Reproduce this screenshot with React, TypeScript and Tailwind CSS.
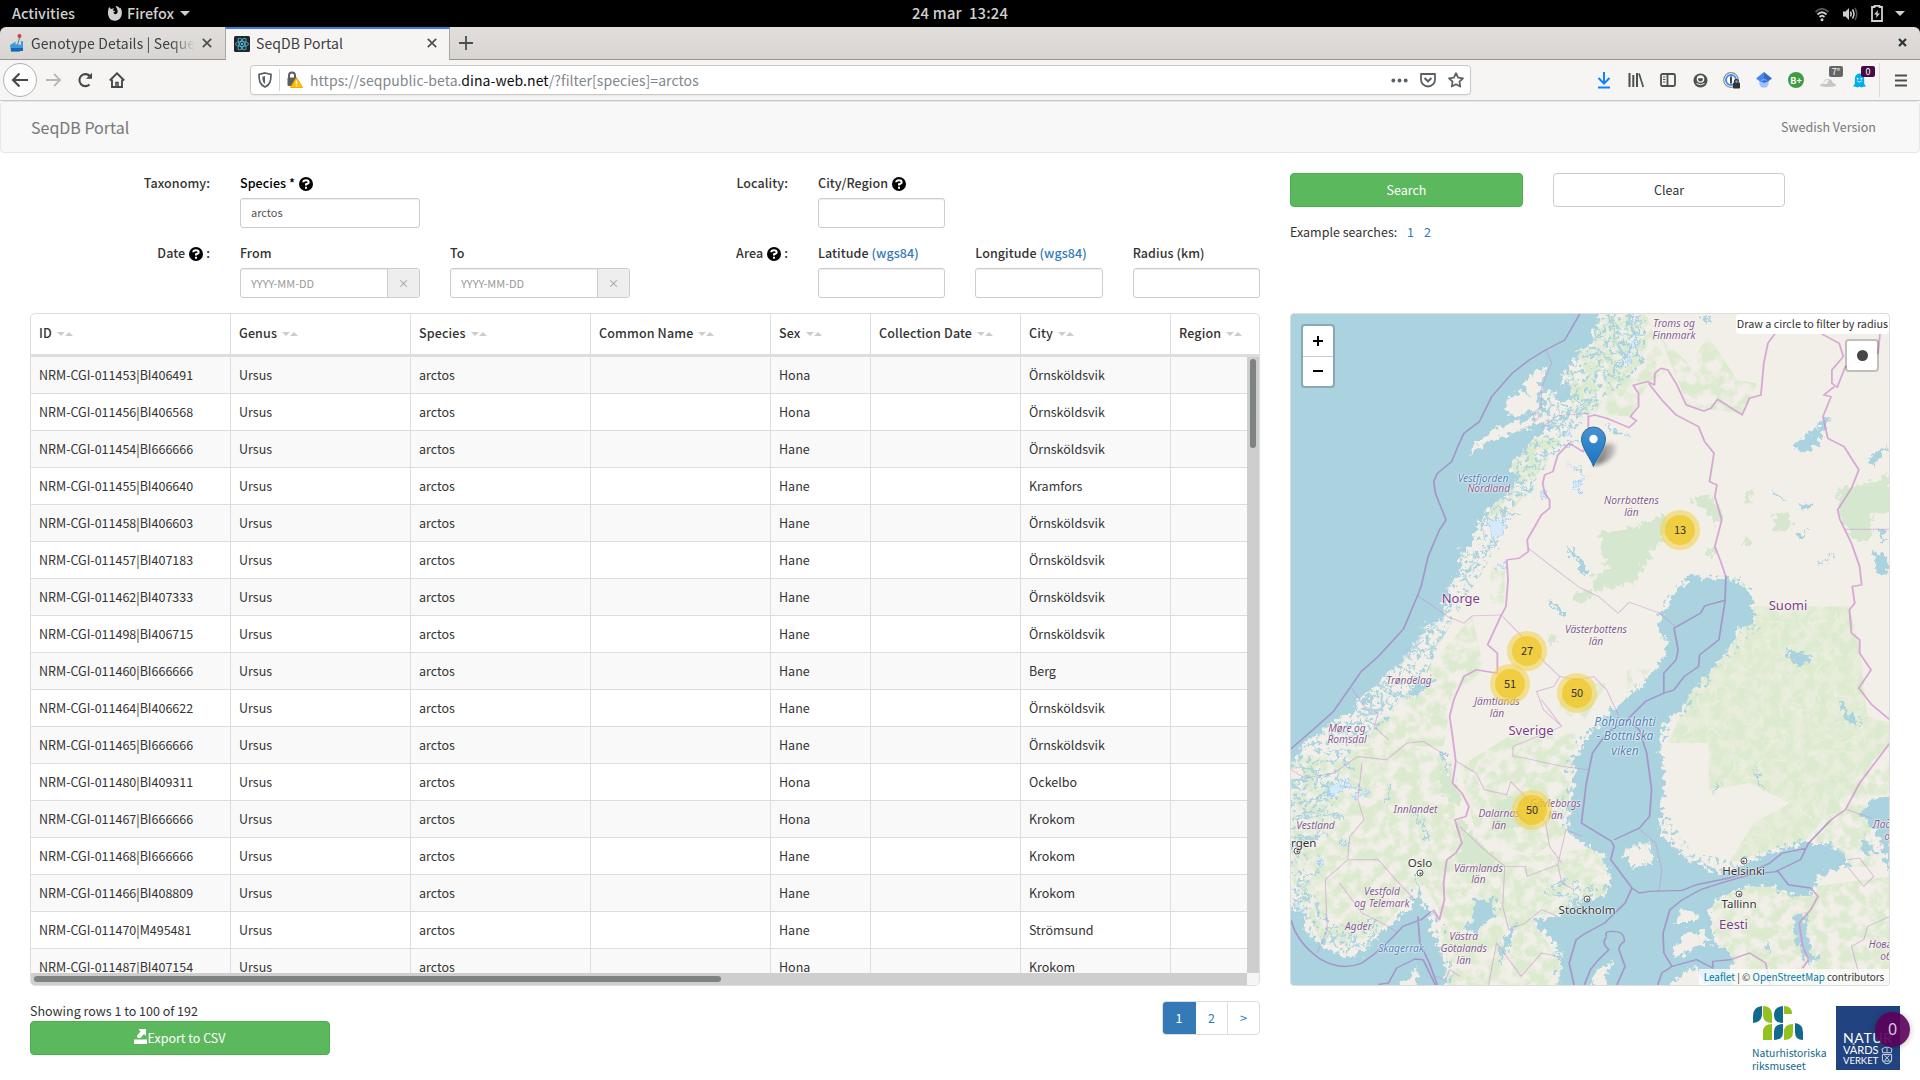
import React from "react";

const rows: [string, string, string][] = [
  ["NRM-CGI-011453|BI406491", "Hona", "Örnsköldsvik"],
  ["NRM-CGI-011456|BI406568", "Hona", "Örnsköldsvik"],
  ["NRM-CGI-011454|BI666666", "Hane", "Örnsköldsvik"],
  ["NRM-CGI-011455|BI406640", "Hane", "Kramfors"],
  ["NRM-CGI-011458|BI406603", "Hane", "Örnsköldsvik"],
  ["NRM-CGI-011457|BI407183", "Hane", "Örnsköldsvik"],
  ["NRM-CGI-011462|BI407333", "Hane", "Örnsköldsvik"],
  ["NRM-CGI-011498|BI406715", "Hane", "Örnsköldsvik"],
  ["NRM-CGI-011460|BI666666", "Hane", "Berg"],
  ["NRM-CGI-011464|BI406622", "Hane", "Örnsköldsvik"],
  ["NRM-CGI-011465|BI666666", "Hane", "Örnsköldsvik"],
  ["NRM-CGI-011480|BI409311", "Hona", "Ockelbo"],
  ["NRM-CGI-011467|BI666666", "Hona", "Krokom"],
  ["NRM-CGI-011468|BI666666", "Hane", "Krokom"],
  ["NRM-CGI-011466|BI408809", "Hane", "Krokom"],
  ["NRM-CGI-011470|M495481", "Hane", "Strömsund"],
  ["NRM-CGI-011487|BI407154", "Hona", "Krokom"],
];

/* ---------- desktop bar ---------- */

function DesktopBar() {
  return (
    <div className="relative flex h-[27px] items-center bg-black text-[14.4px] font-medium text-[#d0d0d0]">
      <span className="ml-3 w-[95px] leading-none">Activities</span>
      <svg width="16" height="17" viewBox="0 0 16 17" className="mb-px mr-1">
        <path d="M2 2 L4 4 L7 3.2 L5.8 5.5 L8.2 6 C7.8 7 6.8 7.2 6.5 7.5 C7 10 10 9.5 10.5 7.5 C11.2 5 9.6 3.5 8.6 1 C12 1.2 12.3 3 13 3.5 L13.4 2.5 C16 7 15 11.5 12.5 14 C9 17 4 16 2 12.5 C0.3 9 1 5 2 2Z" fill="#d0d0d0" />
      </svg>
      <span className="leading-none">Firefox</span>
      <span className="ml-[6px] border-x-[5px] border-t-[5px] border-x-transparent border-t-[#d0d0d0]" />
      <span className="absolute left-1/2 -translate-x-1/2 whitespace-pre text-[14.8px] leading-none tracking-[0.2px]">24 mar  13:24</span>
      <div className="ml-auto flex items-center pr-[15px]">
        <svg width="18" height="16" viewBox="0 0 18 16" fill="none" stroke="#d0d0d0" strokeWidth="1.8">
          <path d="M2.5 6 Q9 -0.5 15.5 6" stroke="#555" />
          <path d="M4.5 8.5 Q9 4 13.5 8.5" />
          <path d="M6.5 11 Q9 8.5 11.5 11" />
          <circle cx="9" cy="13.8" r="1.5" fill="#d0d0d0" stroke="none" />
        </svg>
        <svg width="18" height="16" viewBox="0 0 18 16" className="ml-[10px]" fill="none" stroke="#d0d0d0" strokeWidth="1.5">
          <path d="M2 5.5h2.500L8 2v12l-3.500-3.500H2z" fill="#d0d0d0" stroke="none" />
          <path d="M9.500 5.500q1.500 2.500 0 5M11.500 3.500q3 4.500 0 9" />
          <path d="M14 2q3.500 6 0 12" stroke="#555" />
        </svg>
        <svg width="12" height="17" viewBox="0 0 12 17" className="ml-[12px]">
          <path d="M3.500 2V.8h5V2H11v14H1V2z" fill="none" stroke="#d0d0d0" strokeWidth="1.800" />
          <path d="M7 5L3 9.500h2.500L5 13l4-4.500H6.500z" fill="#d0d0d0" />
        </svg>
        <span className="ml-3 border-x-[5px] border-t-[5px] border-x-transparent border-t-[#d0d0d0]" />
      </div>
    </div>
  );
}

/* ---------- browser chrome ---------- */

const TabX = () => (
  <svg width="10" height="10" viewBox="0 0 10 10" stroke="#4a4f50" strokeWidth="1.700">
    <path d="M.8.8l8.400 8.400M9.200.8L.8 9.200" />
  </svg>
);

function TabStrip() {
  return (
    <div className="bg-black">
      <div className="flex h-[33px] rounded-t-[6px] border-b border-[#979390] bg-linear-to-b from-[#e1dedb] to-[#d9d5d2] text-[14px] text-[#3c4043]">
        <div className="flex w-[225px] items-center pl-[9px]">
          <svg width="16" height="20" viewBox="0 0 16 20" className="mr-[6px]">
            <path d="M1 12l5-3 8-1v8l-4 3H2z" fill="#3f9bd6" />
            <path d="M2 15h12v3H2z" fill="#1f62b0" />
            <path d="M6 11l3-6 3 1v6z" fill="#cbd9e8" />
            <circle cx="10.500" cy="3" r="2" fill="#cc4040" />
            <path d="M10.500 5l-2 7" stroke="#777" />
          </svg>
          <span className="mb-px w-[164px] overflow-hidden whitespace-nowrap leading-[20px] tracking-[0.1px] [mask-image:linear-gradient(90deg,#000_85%,transparent)]">
            Genotype Details | Sequence
          </span>
          <span className="ml-[7px]"><TabX /></span>
        </div>
        <div className="-mb-px flex w-[225px] items-center border-x border-t-2 border-x-[#a9a5a2] border-t-[#3a7de0] bg-[#f6f5f4] pl-[8px]">
          <svg width="16" height="16" viewBox="0 0 16 16" className="mb-px mr-[6px]">
            <rect width="16" height="16" rx="1.500" fill="#22252b" />
            <g fill="none" stroke="#4fb5d0" strokeWidth=".9">
              <ellipse cx="8" cy="8" rx="6.500" ry="2.500" />
              <ellipse cx="8" cy="8" rx="6.500" ry="2.500" transform="rotate(60 8 8)" />
              <ellipse cx="8" cy="8" rx="6.500" ry="2.500" transform="rotate(120 8 8)" />
            </g>
            <circle cx="8" cy="8" r="1.300" fill="#4fb5d0" />
          </svg>
          <span className="mb-[3px] w-[171px] leading-[20px] tracking-[0.1px]">SeqDB Portal</span>
          <span className="mb-[3px]"><TabX /></span>
        </div>
        <div className="flex flex-1 items-center justify-between pb-px pl-[9px] pr-[13px]">
          <svg width="14" height="14" viewBox="0 0 14 14" stroke="#4a4f50" strokeWidth="1.800"><path d="M7 0v14M0 7h14" /></svg>
          <svg width="9" height="9" viewBox="0 0 9 9" stroke="#2e3436" strokeWidth="2.200"><path d="M1 1l7 7M8 1L1 8" /></svg>
        </div>
      </div>
    </div>
  );
}

const Slot = ({ children }: { children: React.ReactNode }) => (
  <div className="relative flex h-8 w-8 items-center justify-center">{children}</div>
);

function Toolbar() {
  return (
    <div className="flex h-[41px] items-center border-b border-[#cdc7c2] bg-[#f6f5f4] pl-[3px]">
      <div className="flex h-[34px] w-[34px] items-center justify-center rounded-full border border-[#b5b1ae] bg-[#fcfcfc]">
        <svg width="18" height="16" viewBox="0 0 18 16" fill="none" stroke="#45494a" strokeWidth="2.100"><path d="M17 8H2M8.500 1.500L2 8l6.500 6.500" /></svg>
      </div>
      <Slot><svg width="17" height="16" viewBox="0 0 18 16" fill="none" stroke="#b8b6b4" strokeWidth="1.900"><path d="M1 8h15M9.500 1.500L16 8l-6.500 6.500" /></svg></Slot>
      <Slot>
        <svg width="16" height="16" viewBox="0 0 16 16" fill="none" stroke="#45494a" strokeWidth="2.100">
          <path d="M12.500 12.500A6 6 0 1 1 12.800 4" /><path d="M15 .8v6H9z" fill="#45494a" stroke="none" />
        </svg>
      </Slot>
      <Slot>
        <svg width="16" height="16" viewBox="0 0 16 16" fill="none" stroke="#45494a" strokeWidth="1.900">
          <path d="M.8 8.500L8 1.300l7.200 7.200" /><path d="M3 7.500V15h10V7.500" /><path d="M7 15v-4.500h2V15" strokeWidth="1.500" />
        </svg>
      </Slot>
      <div className="ml-[117px] flex h-[30px] w-[1221px] items-center rounded-[4px] border border-[#cdc7c2] bg-white shadow-[0_1px_2px_rgba(0,0,0,0.06)]">
        <svg width="14" height="16" viewBox="0 0 14 16" className="ml-[7px]" fill="none" stroke="#5b5f60" strokeWidth="1.700">
          <path d="M7 1L13 2.500C13 9 12 13 7 15C2 13 1 9 1 2.500z" /><path d="M7 4v8C5 10.500 4.300 8.500 4.300 4.800z" fill="#5b5f60" stroke="none" />
        </svg>
        <span className="ml-[7px] h-[22px] w-px bg-[#d5d1ce]" />
        <svg width="17" height="18" viewBox="0 0 17 18" className="ml-[6px]">
          <path d="M3 7V4.500Q3 1.500 6 1.500T9 4.500V7" fill="none" stroke="#5b5f60" strokeWidth="2" />
          <rect x="1.500" y="6.500" width="9.500" height="8.500" rx="1" fill="#5b5f60" />
          <path d="M10.500 6.500L16.500 16.500H4.500z" fill="#ffbf00" stroke="#f5a800" strokeLinejoin="round" />
          <path d="M10.500 9.500v3.600M10.500 14.200v1.300" stroke="#fff" strokeWidth="1.400" />
        </svg>
        <span className="ml-[7px] text-[14px] leading-[20px] tracking-[0.06px] text-[#83878a]">
          https://seqpublic-beta.<span className="text-[#0c0c0d]">dina-web.net</span>/?filter[species]=arctos
        </span>
        <div className="ml-auto mr-[6px] flex items-center gap-3">
          <svg width="17" height="5" viewBox="0 0 17 5" fill="#5b5f60"><circle cx="2.300" cy="2.500" r="1.900" /><circle cx="8.500" cy="2.500" r="1.900" /><circle cx="14.700" cy="2.500" r="1.900" /></svg>
          <svg width="16" height="16" viewBox="0 0 16 16" fill="none" stroke="#5b5f60" strokeWidth="1.800">
            <path d="M1 2h14v5.500A7 7 0 0 1 1 7.500z" strokeLinejoin="round" /><path d="M4.500 6L8 9.300 11.500 6" strokeWidth="2" />
          </svg>
          <svg width="16" height="16" viewBox="0 0 16 16" fill="none" stroke="#5b5f60" strokeWidth="1.700" strokeLinejoin="round">
            <path d="M8 1.200l2.100 4.500 4.900.6-3.600 3.400.9 4.900L8 12.200l-4.300 2.400.9-4.900L1 6.300l4.900-.6z" />
          </svg>
        </div>
      </div>
      <div className="ml-[117px] flex">
        <Slot><svg width="16" height="18" viewBox="0 0 16 18" fill="none" stroke="#0a84ff" strokeWidth="2"><path d="M8 1v11M2.500 7L8 12.500 13.500 7M2 16.500h12" /></svg></Slot>
        <Slot><svg width="16" height="16" viewBox="0 0 16 16" fill="none" stroke="#4a4f50" strokeWidth="2"><path d="M1.500 1v14M5.300 3v12M9 1v14" /><path d="M11 1.500L15.300 15" strokeWidth="1.700" /></svg></Slot>
        <Slot><svg width="16" height="14" viewBox="0 0 16 14" fill="none" stroke="#4a4f50" strokeWidth="1.800"><rect x="1" y="1" width="14" height="12" rx="1.500" /><path d="M7.500 1v12" /><path d="M3 4h2.500M3 6.500h2.500M3 9h2.500" strokeWidth="1" /></svg></Slot>
        <Slot><svg width="15" height="15" viewBox="0 0 15 15"><circle cx="7.500" cy="7.500" r="7" fill="#4a4f50" /><circle cx="7.500" cy="6" r="3.800" fill="#f6f5f4" /><path d="M5.200 5.200h4.600v1a2.300 2.300 0 0 1-4.600 0z" fill="#4a4f50" /><path d="M3.500 10.500q4 2.500 8 0" fill="none" stroke="#f6f5f4" /></svg></Slot>
        <Slot>
          <svg width="18" height="17" viewBox="0 0 18 17"><circle cx="8" cy="8" r="7.300" fill="#fff" stroke="#8b8b8b" strokeWidth="1.200" /><circle cx="8" cy="8" r="5" fill="none" stroke="#3c8df0" strokeWidth="2" /><path d="M8 4.500v7" stroke="#444" strokeWidth="2" /><rect x="10" y="10.500" width="7" height="6" rx=".8" fill="#333" /><path d="M11.600 10.500V9q0-1.300 1.800-1.300T15.200 9v1.500" fill="none" stroke="#333" strokeWidth="1.300" /></svg>
        </Slot>
        <Slot><svg width="16" height="16" viewBox="0 0 16 16"><circle cx="8" cy="11" r="4.800" fill="#a0c3ff" /><path d="M0 6.500L8 0v11L4 9.500z" fill="#4285f4" /><path d="M16 6.500L8 0v11l4-1.500z" fill="#356ac3" /><path d="M3.800 9.500Q8 4 12.200 9.500L8 8z" fill="#76a7fa" /></svg></Slot>
        <Slot><span className="flex h-4 w-4 items-center justify-center rounded-full bg-[#3f9d45] text-[9px] font-bold leading-none text-white">B+</span></Slot>
        <Slot>
          <svg width="18" height="12" viewBox="0 0 18 12" className="mt-1"><path d="M1 10q0-2 3-2.500Q6 2 10 3q3 .5 4 4 3 .5 3 3-8 2-16 0z" fill="#c6c6c6" /><path d="M4 8q2-5 6-4.500L8 8z" fill="#f1f1f1" /></svg>
          <span className="absolute left-[17px] top-[2px] h-[11px] w-[14px] rounded-[2px] bg-[#666] text-center text-[9px] leading-[11px] text-white">7°</span>
        </Slot>
        <Slot>
          <svg width="13" height="15" viewBox="0 0 14 15" className="mr-[2px]"><path d="M2 5a5 5 0 0 1 10 0v6l2 3-3 .3L9 15l-2-1-2 1-2-.7L0 14l2-3z" fill="#00aef0" /><circle cx="5" cy="5.500" r="1" fill="#fff" /><circle cx="9" cy="5.500" r="1" fill="#fff" /><path d="M4.500 8q2.500 2.500 5 0" stroke="#fff" fill="none" /></svg>
          <span className="absolute left-[17px] top-[2px] h-[11px] w-[14px] rounded-[2px] bg-[#440b44] text-center text-[9px] leading-[11px] text-white">0</span>
        </Slot>
      </div>
      <span className="ml-[3px] h-[34px] w-px bg-[#dcd9d6]" />
      <svg width="12" height="13" viewBox="0 0 12 13" className="ml-[15px]" stroke="#4a4f50" strokeWidth="2"><path d="M0 1.500h12M0 6.500h12M0 11.500h12" /></svg>
    </div>
  );
}

/* ---------- search form ---------- */

const Help = () => (
  <span className="ml-1 mr-[3px] inline-flex h-[14px] w-[14px] items-center justify-center rounded-full bg-black align-[-1px]">
    <svg width="8" height="10" viewBox="0 0 8 10" fill="none" stroke="#fff" strokeWidth="2"><path d="M1.200 3.300Q1.300 1.200 4 1.200T6.700 3.200Q6.700 4.500 4 5.200V6.600M4 7.800V9.800" /></svg>
  </span>
);

const box = "h-[30px] rounded-[3px] border border-[#ccc] bg-white shadow-[inset_0_1px_1px_rgba(0,0,0,0.075)]";
const groupLabel = "text-right font-medium leading-5 tracking-[0.08px]";

function Field({ label, children }: { label: React.ReactNode; children: React.ReactNode }) {
  return (
    <div className="min-w-0 flex-1">
      <div className="mb-[5px] h-5 whitespace-nowrap font-medium leading-5 tracking-[0.06px]">{label}</div>
      {children}
    </div>
  );
}

const DateBox = () => (
  <div className={`${box} flex overflow-hidden text-[11px] leading-[28px] text-[#999]`}>
    <span className="flex-1 pl-[10px]">YYYY-MM-DD</span>
    <span className="w-8 border-l border-[#ccc] bg-[#eee] text-center">×</span>
  </div>
);

const Wgs = () => <span className="text-[#337ab7]">(wgs84)</span>;

function SearchForm() {
  return (
    <div className="h-[160px] pt-5">
      <div className="flex h-[70px]">
        <div className={`${groupLabel} w-[180px]`}>Taxonomy:</div>
        <div className="ml-[30px] flex w-[180px]">
          <Field label={<span className="text-black">Species *<Help /></span>}>
            <div className={`${box} pl-[10px] text-[11px] leading-[27px] text-[#555]`}>arctos</div>
          </Field>
        </div>
        <div className={`${groupLabel} ml-[210px] w-[158px]`}>Locality:</div>
        <div className="ml-[30px] flex w-[127px]">
          <Field label={<>City/Region<Help /></>}><div className={box} /></Field>
        </div>
      </div>
      <div className="flex h-[70px]">
        <div className={`${groupLabel} w-[180px]`}>Date<Help />:</div>
        <div className="ml-[30px] flex w-[420px] gap-[30px] pr-[30px]">
          <Field label="From"><DateBox /></Field>
          <Field label="To"><DateBox /></Field>
        </div>
        <div className={`${groupLabel} w-[128px]`}>Area<Help />:</div>
        <div className="ml-[30px] flex w-[442px] gap-[30px]">
          <Field label={<>Latitude <Wgs /></>}><div className={box} /></Field>
          <Field label={<>Longitude <Wgs /></>}><div className={box} /></Field>
          <Field label="Radius (km)"><div className={box} /></Field>
        </div>
      </div>
    </div>
  );
}

/* ---------- result table ---------- */

const cols = "grid grid-cols-[200px_180px_180px_180px_100px_150px_150px_1fr]";
const cell = "border-r border-[#ddd] pl-2 last:border-r-0 whitespace-nowrap overflow-hidden";
const heads = ["ID", "Genus", "Species", "Common Name", "Sex", "Collection Date", "City", "Region"];

function ResultTable() {
  return (
    <div className="flex h-[673px] flex-col overflow-hidden rounded-[5px] border border-[#ddd]">
      <div className={`${cols} h-[43px] shrink-0 border-b-[3px] border-[#ddd]`}>
        {heads.map((h) => (
          <div key={h} className={`${cell} flex items-center pb-px font-medium tracking-[0.14px]`}>
            <span className="mb-[2px] mr-[5px] leading-5">{h}</span>
            <span className="border-x-4 border-t-4 border-x-transparent border-t-[#ccc]" />
            <span className="border-x-4 border-b-4 border-x-transparent border-b-[#ccc]" />
          </div>
        ))}
      </div>
      <div className="flex min-h-0 flex-1">
        <div className="min-w-0 flex-1 overflow-hidden">
          {rows.map((r, i) => (
            <div key={r[0]} className={`${cols} h-[37px] border-b border-[#ddd] leading-[35px] ${i % 2 ? "bg-white" : "bg-[#f9f9f9]"}`}>
              {[r[0], "Ursus", "arctos", "", r[1], "", r[2], ""].map((t, j) => (
                <div key={j} className={cell}>{t}</div>
              ))}
            </div>
          ))}
        </div>
        <div className="w-3 bg-[#cecece] px-[3px] pt-[2px]"><div className="h-[89px] rounded-full bg-[#7e8281]" /></div>
      </div>
      <div className="flex h-3 shrink-0">
        <div className="flex-1 bg-[#cecece] px-[3px] pt-[3px]"><div className="h-[6px] w-[687px] rounded-full bg-[#7e8281]" /></div>
        <div className="w-3 bg-[#f6f5f4]" />
      </div>
    </div>
  );
}

/* ---------- map ---------- */

const LAND =
  "M790 470L770 540 765 580 730 600 715 640 690 670 690 700 715 710 700 750 690 790 700 810 665 820 640 850 610 880 600 910 570 930 565 960 585 985 570 1010 545 1040 520 1070 490 1100 480 1140 470 1180 440 1210 445 1250 420 1290 410 1330 400 1360 400 1400 375 1430 345 1440 340 1470 320 1490 300 1540 260 1570 230 1610 190 1650 180 1690 130 1710 100 1750 60 1770 50 1800 26 1840L0 1850V2260L30 2270 60 2300 60 2350 100 2390 160 2425 200 2410 250 2350 300 2290 330 2250 335 2200 350 2260 370 2290 370 2340 385 2380 400 2430 410 2520H680L690 2440 680 2380 640 2340 620 2310 680 2300 720 2270 760 2250 800 2230 810 2180 790 2120 740 2080 710 2050 705 1990 720 1900 715 1850 740 1790 760 1750 790 1710 830 1660 880 1620 920 1560 950 1500 940 1460 925 1430 940 1380 960 1340 985 1310 1000 1280 1060 1285 1110 1290 1150 1320 1160 1380 1165 1420 1120 1440 1110 1480 1060 1560 1010 1620 980 1680 940 1720 930 1780 940 1860 940 1920 935 1990 930 2040 960 2090 1010 2140 1050 2160 1080 2170 1130 2150 1200 2110 1290 2080 1340 2080 1380 2110 1400 2150 1350 2160 1320 2180 1300 2240 1260 2240 1200 2210 1150 2210 1080 2240 1060 2260 1050 2300 1060 2330 1060 2380 1100 2400 1110 2430 1100 2470 1110 2520H1520V470Z";
const ISLANDS =
  "M460 930L480 880 520 840 570 820 620 800 640 790 690 795 660 820 600 835 540 860 500 880ZM555 795L548 755 575 735 590 720 612 745 615 780 590 800ZM610 740L600 700 625 660 648 655 640 700 632 740 635 790 615 780ZM650 770L645 730 668 712 672 740 690 760 690 790 665 795ZM820 2430L780 2460 755 2500 790 2520 800 2470ZM980 2360L1040 2340 1050 2370 1020 2390 970 2430 962 2400ZM980 2280L1020 2290 1020 2320 970 2320ZM840 2110L870 2090 900 2080 920 2140 860 2150ZM335 2455L290 2520H330ZM1010 2450L940 2520H1060ZM195 1655l25-25 15 12-25 25ZM345 1435l20-18 15 15-25 10Z";
const LAKES =
  "M1500 1925L1440 1960 1420 2000 1450 2030 1470 2080 1500 2180ZM1255 2300L1290 2290 1290 2350 1300 2400 1320 2430 1290 2440 1265 2370ZM480 2250L530 2250 525 2290 480 2350 450 2330 475 2310ZM580 2315L545 2430 533 2445 548 2370ZM1340 800L1300 850 1260 885 1275 910 1310 890 1335 840ZM1235 1490L1250 1530 1275 1550 1310 1515 1270 1510ZM700 935L730 960 760 985 735 970ZM785 815L820 840 865 860 820 850ZM693 1180L725 1215 755 1250 740 1275 725 1230ZM755 1290L775 1310 765 1300ZM655 1350L690 1380 698 1400 670 1375ZM1365 1650L1400 1690 1420 1730 1385 1710ZM1455 1200L1490 1230 1490 1280 1460 1270ZM1265 1055L1310 1065 1285 1080ZM1205 1020L1245 1055 1215 1040ZM1365 1205L1340 1235 1310 1245 1340 1225ZM1030 490l25 30-20-5zM1430 2060l40 60-50-20zM1460 1140l30 5-15 35zM1290 1140l-10 25-18-8zM1160 1830l15 60 10 40-15-30zM1075 1890l-15 50 15-20zM1440 920l50-30-35 60zM325 1610l60-30-40 50-35 20zM1195 2370l8 40-10-10z";
const FJORDS =
  "M775 520l20 60 20 30M810 500l10 50 30 40M850 490l20 60-15 50-35 60M880 500l-10 80 15 60M780 600l40 50 10 40M740 620l50-10M700 740l50 20 30 20M690 790l60-20 20-30M640 830l60-10 40 10M650 860l40 30 40-20M600 910l50 10 30-20M590 960l60-10M570 1000l50 20M520 1070l60 30M490 1130l40-10M440 1220l60-10 30-30M430 1280l50-30M400 1380l30-30M350 1440l-30 60 40 20M300 1550l40 40M240 1620l60 20 40-40M190 1700l60-20M130 1720l50 50M60 1780l60 30 50-10M30 1850l50 10 40 60M30 1900l50-20M30 1960l60-10 50-40 60 10M30 2000l60-15 60 20M30 2100l30-30 60-20M30 2060l60 10M40 2200l30-30 30 0M40 2250l40-20M100 2380l30-50M160 2410l20-60M210 2390l20-50M335 2260v-90M330 1990l20 40 15 50M400 1810l10 60M640 2230l60 10 30 30 30-60M660 2220l40-30M725 2260v-70M620 2310l30 0M260 1960l10-60M150 1820l30 50";
const COAST_BELT =
  "M760 480H900L890 640 840 700 800 740 730 820 690 880 640 930 620 1020 560 1080 530 1180 500 1260 460 1330 430 1400 390 1480 360 1570 300 1640 260 1720 190 1790 140 1850 170 1900 120 1980 90 2060 60 2150 80 2230 130 2330 250 2300 250 2400H20V1780L180 1600 420 1200 560 900 680 700Z";
const ARCHIPELAGO =
  "M700 2260L800 2200 790 2100 840 2200 760 2290 690 2330ZM920 1960L960 2010 1010 2110 1110 2130 1290 2060 1280 2100 1100 2180 960 2120ZM925 1380L960 1320 1000 1270 1130 1280 1180 1430 1080 1560 980 1720 930 1800 920 1720 1100 1440 1100 1320 990 1330 960 1420ZM690 1860L730 1760 840 1640 930 1540 930 1600 820 1720 740 1840 710 2040 690 2040ZM660 2330L720 2420 700 2510 670 2510ZM370 2280L400 2500 430 2500 400 2300Z";
const GREENS =
  "M785 1145L830 1140 870 1130 900 1120 930 1095 960 1105 950 1150 920 1190 900 1230 880 1265 870 1300 820 1310 770 1325 765 1275 810 1260 790 1220ZM1010 1050L1050 1030 1080 1080 1080 1130 1050 1095ZM1210 1090L1250 1085 1255 1135 1215 1145ZM1370 1010L1440 1000 1500 970V1085L1455 1090 1450 1175 1410 1180 1370 1090ZM430 2000L470 2050 520 2120 540 2160 430 2135 450 2080ZM530 1960L580 1930 580 2000 620 2030 520 2040ZM725 1325L760 1320 755 1350 725 1360ZM1135 1030l22-10 0 35-22 5zM1140 1150l20 30-25 10zM1050 1190l18 5-5 25-18-5zM660 1450l20 10-5 25-18-10zM390 1840l40 60 20 60-30 0-30-40z";
const MOTTLE =
  "M30 1830L300 1780 420 1830 430 2020 400 2300 350 2200 200 2400 100 2380 60 2270 30 2200ZM380 2200L430 2020 500 2100 620 2120 790 2090 800 2230 690 2290 610 2300 690 2440V2506H410ZM440 1850L560 1760 730 1750 710 1900 700 2050 620 2120 480 2060ZM700 500H900L950 660 900 700 860 800 720 790 700 700ZM1060 2210H1300L1500 2180V2506H1110L1060 2330ZM930 560L1000 640 1050 560 1120 690 1170 700 1130 790 1000 770ZM1380 1840H1494V1960L1440 1980 1460 2150H1300L1300 2080ZM600 850L690 870 640 960 560 1100 500 1100ZM515 1250h35v110h-35ZM330 1600L470 1400 500 1560 420 1640 400 1790 180 1790ZM700 1600h100l-60 120-60-40ZM850 1560h60l-60 70Z";
const FINLAND =
  "M1160 1370H1395L1420 1500 1440 1700 1494 1720V1780L1400 1900 1290 2070 1190 2105 1100 2140 1160 2020 1250 1960 1150 1900 1050 1920V1780L950 1780 1010 1620 1110 1480Z";

const SEA_BORDER =
  "M735 490L697 570 650 600 610 630 568 670 518 740 488 815 450 850 435 890 420 935 385 970 376 995 380 1030 406 1110 390 1140 362 1220 345 1310 336 1338 302 1437 240 1520 198 1565 170 1615 130 1685 80 1740 26 1797M26 2310Q40 2380 100 2430 150 2465 200 2440 250 2400 300 2330L345 2310 370 2285M337 2300L342 2380 365 2440 385 2506M240 2504L265 2500 285 2455 330 2428 350 2430 380 2506M1092 1280L1090 1355 1075 1470 1028 1515 1025 1550 990 1580 965 1620 940 1630 895 1655 850 1710 800 1750 765 1810 750 1900 738 2020 812 2075 818 2090 810 2130 862 2215 845 2260 795 2320 742 2355 725 2370 708 2440 720 2506M850 1710L880 1740 898 1810 910 1920 905 2000 880 2035 818 2070M862 2215L880 2230 905 2225 985 2222 1020 2205 1100 2185 1165 2160 1200 2140 1230 2110 1290 2095M925 2506L935 2470 960 2450 940 2410 938 2350 955 2280 985 2250 1030 2220 1080 2200 1150 2175 1220 2165 1245 2205 1300 2215M1215 2165L1275 2130 1295 2080 1350 2010M1088 1352L1040 1368 1030 1390 965 1435 975 1500 970 1530 940 1570 940 1630M800 2360Q792 2345 815 2345 845 2345 843 2375 830 2385 830 2400L845 2450 825 2506M800 2360Q785 2380 805 2400L780 2430 760 2460 745 2506M960 2450L1020 2430 1060 2455V2435L1105 2430";
const LAND_BORDER =
  "M900 695L865 706 878 730 878 770 858 800 873 812 855 833 800 805 770 795 755 800 755 880 742 905 708 880 680 915 668 965 648 975 643 1000 648 1030 660 1050 660 1075 640 1095 605 1170 608 1205 585 1225 555 1230 558 1290 553 1370 540 1400 508 1485 532 1510 532 1570 480 1560 450 1580 425 1650 415 1700 422 1760 430 1835 422 1900 445 1930 462 1970 455 2000 428 2010 445 2080 430 2110 408 2130 400 2200 402 2250 390 2310 375 2280M900 695L917 705 918 670 933 655 950 660 970 700 995 765 1038 783 1055 775 1072 748 1132 795 1150 745 1178 735 1185 640 1195 580 1213 550 1213 500M1327 552L1370 580 1380 620 1352 660 1352 700 1365 712 1385 650 1420 640 1465 610 1470 550M1358 710L1332 735 1350 740 1330 800 1342 865 1382 890 1418 960 1400 1015 1366 1080 1372 1110 1400 1180 1420 1250 1425 1305 1402 1310 1408 1360 1395 1380 1400 1450 1420 1470 1420 1510 1448 1560 1418 1615 1450 1665 1494 1710M1494 1780L1420 1900 1385 1980 1350 2010M903 700L935 750 970 795 1025 830 1040 875 1063 910 1052 995 1070 1005 1065 1040 1082 1110 1065 1190 1078 1230 1092 1280M1300 2215L1318 2240 1300 2280 1272 2320 1280 2390 1295 2430 1280 2455M1105 2430L1150 2410 1190 2440 1200 2506";
const COUNTIES =
  "M608 1195L660 1245 730 1310 780 1340 828 1390 855 1357 930 1390 968 1430M545 1400L600 1470 650 1540 685 1580 730 1590 768 1580 800 1620 830 1700M685 1580L670 1610 628 1625 645 1680 690 1730 570 1790V1820L600 1825 690 1850 755 1860M432 1835L480 1870 500 1920 555 1935 565 1895 600 1940 650 2020 660 2090 690 2140M336 1338L370 1365 410 1400 450 1420 470 1398 545 1395M26 1860L60 1885 130 1870 190 1820 260 1830 310 1780 350 1775 410 1820M200 1840L190 1950 205 2010 170 2060 165 2130 110 2190 115 2340 90 2410M165 2130L240 2130 290 2200 330 2250M145 2200L200 2290 250 2320 290 2350M440 2030L500 2100 550 2150 545 2270 560 2340 600 2320 640 2280 680 2300M550 2150L600 2150 605 2180 680 2145 700 2040 740 2060M680 2145L690 2200 720 2220M755 800V790L680 797 640 833M652 600L665 640 640 715 640 770 618 790 625 815 640 790M175 1615L205 1670 240 1690 230 1730 265 1770M640 1650L690 1730M1382 1138H1494M882 2040L920 2080 935 2160 928 2225M380 2480L405 2490 415 2460 440 2480M510 2506L530 2380 590 2480 640 2410 680 2420M1390 2130L1420 2125 1455 2180 1430 2210 1390 2150M1494 2300L1440 2330 1430 2370 1400 2390 1420 2480 1494 2500M1390 1980L1450 2005";

type Label = [x: number, y: number, text: string, kind: "r" | "c" | "t" | "w" | "W"];
const labels: Label[] = [
  [1460.8, 598, "Norge", "c"], [1788, 605, "Suomi", "c"], [1531, 730, "Sverige", "c"], [1733.5, 924, "Eesti", "c"],
  [1674, 322.5, "Troms og", "r"], [1674, 334.5, "Finnmark", "r"], [1483, 478, "Vestfjorden", "w"], [1488.6, 488, "Nordland", "r"],
  [1631.4, 500, "Norrbottens", "r"], [1631.4, 512, "län", "r"], [1596, 628.5, "Västerbottens", "r"], [1596, 640.5, "län", "r"],
  [1409, 680, "Trøndelag", "r"], [1497, 701, "Jämtlands", "r"], [1497, 713, "län", "r"], [1347, 727.5, "Møre og", "r"], [1347, 739, "Romsdal", "r"],
  [1625, 721.5, "Pohjanlahti", "W"], [1625, 736, "- Bottniska", "W"], [1625, 751, "viken", "W"],
  [1415.5, 809, "Innlandet", "r"], [1315.5, 825, "Vestland", "r"], [1555.5, 803, "Gävleborgs", "r"], [1555.5, 815, "län", "r"],
  [1499, 813, "Dalarnas", "r"], [1499, 825, "län", "r"], [1303.7, 843, "rgen", "t"], [1420, 863, "Oslo", "t"],
  [1478.4, 867.5, "Värmlands", "r"], [1478.4, 879, "län", "r"], [1382, 891, "Vestfold", "r"], [1382, 903, "og Telemark", "r"],
  [1358.4, 926, "Agder", "r"], [1401, 948, "Skagerrak", "w"], [1463.7, 935.5, "Västra", "r"], [1463.7, 947.5, "Götalands", "r"],
  [1463.7, 959.5, "län", "r"], [1587, 910, "Stockholm", "t"], [1743.7, 871, "Helsinki", "t"], [1739, 904, "Tallinn", "t"],
  [1882, 824, "Лад", "r"], [1887, 836, "о", "r"], [1880, 944, "Новг", "r"], [1886, 956, "об", "r"],
];
const labelStyle = {
  r: "text-[10.2px] italic text-[#845a8c]",
  w: "text-[10.2px] italic text-[#4d80b3]",
  W: "text-[12px] italic text-[#4d80b3]",
  c: "text-[13px] text-[#7c3a84]",
  t: "text-[11.5px] text-[#333]",
};
const dots: [number, number][] = [[1420, 873], [1587, 899], [1743.7, 861], [1739, 894], [1297, 851]];
const clusters: [number, number, number][] = [[1680, 530, 13], [1527, 651, 27], [1510, 684, 51], [1577, 693, 50], [1532, 810, 50]];

function MapPanel() {
  return (
    <div className="relative h-[673px] w-[600px] overflow-hidden rounded-[4px] border border-[#ddd] bg-[#aad3df]">
      <svg className="block h-full w-full" viewBox="26 492 1466 2014" preserveAspectRatio="none">
        <defs>
          <filter id="rough" x="0" y="0" width="100%" height="100%">
            <feTurbulence type="fractalNoise" baseFrequency=".07 .055" numOctaves="3" seed="4" />
            <feDisplacementMap in="SourceGraphic" scale="40" xChannelSelector="R" yChannelSelector="G" />
          </filter>
          <filter id="mottle" x="0" y="0" width="100%" height="100%">
            <feTurbulence type="fractalNoise" baseFrequency=".035 .03" numOctaves="5" seed="9" />
            <feColorMatrix values="0 0 0 0 0 0 0 0 0 0 0 0 0 0 0 4 0 0 0 -1.45" />
            <feComposite in="SourceGraphic" operator="in" />
          </filter>
          <filter id="veins" x="0" y="0" width="100%" height="100%">
            <feTurbulence type="turbulence" baseFrequency=".022 .018" numOctaves="2" seed="5" />
            <feColorMatrix values="0 0 0 0 0 0 0 0 0 0 0 0 0 0 0 -11 0 0 0 1.2" />
            <feComposite in="SourceGraphic" operator="in" />
          </filter>
          <filter id="skerries" x="0" y="0" width="100%" height="100%">
            <feTurbulence type="fractalNoise" baseFrequency=".09 .07" numOctaves="3" seed="12" />
            <feColorMatrix values="0 0 0 0 0 0 0 0 0 0 0 0 0 0 0 10 0 0 0 -5.9" />
            <feComposite in="SourceGraphic" operator="in" />
          </filter>
          <clipPath id="landclip"><path d={LAND} /></clipPath>
        </defs>
        <g filter="url(#rough)"><path d={LAND + ISLANDS} fill="#f2efe9" /></g>
        <g clipPath="url(#landclip)">
          <path d={FINLAND} fill="#e7edda" />
          <g filter="url(#mottle)">
            <path d={MOTTLE} fill="#dceacf" />
            <path d={FINLAND} fill="#dceacf" />
          </g>
          <g filter="url(#veins)"><path d={FINLAND} fill="#eef0e2" opacity=".8" /></g>
        </g>
        <g filter="url(#veins)"><path d={COAST_BELT} fill="#aad3df" /></g>
        <g filter="url(#skerries)"><path d={ARCHIPELAGO + COAST_BELT} fill="#aad3df" /></g>
        <g filter="url(#rough)">
          <path d={GREENS} fill="#d6e7cf" />
          <path d={LAKES} fill="#aad3df" />
          <path d={FJORDS} fill="none" stroke="#aad3df" strokeWidth="5" />
        </g>
        <g filter="url(#rough)" fill="#d5e9f8" stroke="#90c4f7" strokeWidth="2">
          <path d="M115 1920l30-25 12 20-15 20-22 5zM160 1890l14 5-2 20-14 8zM510 1125l20-15 25 20-10 25-25 5zM90 2130l12-8 8 15-15 20zM720 1000l15-8 5 14-15 5zM635 1030l12-4 6 14-12 8zM530 1245h18v10h-18zM200 1930l15-8 5 12-12 8zM180 1925l12 5-5 15-10-5zM695 850l12-5 4 12-12 6zM848 620l12-6v25l-10 8zM860 570h14v15h-14zM545 1100l10-4 2 12-9 4zM722 1020l8-2v10h-8zM150 2075h12v12h-12z" />
        </g>
        <g fill="none" strokeLinejoin="round">
          <path d={COUNTIES} stroke="#c98fd0" strokeOpacity=".55" strokeWidth="2.600" />
          <path d={LAND_BORDER} stroke="#cf8fcf" strokeOpacity=".75" strokeWidth="4.500" />
          <path d={SEA_BORDER} stroke="#a58bc6" strokeOpacity=".85" strokeWidth="4.200" />
        </g>
      </svg>

      <div className="absolute -left-[1291px] -top-[314px] h-0 w-0 font-['Noto_Sans']">
        {dots.map(([x, y]) => (
          <span key={`${x}-${y}`} className="absolute h-[7px] w-[7px] -translate-x-1/2 -translate-y-1/2 rounded-full border border-[#555] bg-white after:absolute after:left-[1.5px] after:top-[1.5px] after:h-[2px] after:w-[2px] after:bg-[#444]" style={{ left: x, top: y }} />
        ))}
        {labels.map(([x, y, t, k], i) => (
          <span key={i} className={`absolute -translate-x-1/2 -translate-y-1/2 whitespace-nowrap leading-none [text-shadow:0_0_2px_#fff,0_0_2px_#fff,0_0_1px_#fff] ${labelStyle[k]}`} style={{ left: x, top: y }}>{t}</span>
        ))}
      </div>

      <div className="absolute -left-[1291px] -top-[314px] h-0 w-0">
        {clusters.map(([x, y, n]) => (
          <span key={`${x}`} className="absolute flex h-10 w-10 -translate-x-1/2 -translate-y-1/2 items-center justify-center rounded-full bg-[#f1d357]/60" style={{ left: x, top: y }}>
            <span className="h-[30px] w-[30px] rounded-full bg-[#f0c20c]/60 text-center text-[11px] leading-[29px] text-[#333]">{n}</span>
          </span>
        ))}
      </div>

      <svg className="absolute left-[289px] top-[112px]" width="50" height="42" viewBox="0 0 50 42">
        <defs>
          <linearGradient id="pin" x1="0" y1="0" x2="0" y2="1"><stop offset="0" stopColor="#4694d1" /><stop offset="1" stopColor="#1a73c4" /></linearGradient>
          <linearGradient id="fade" x1="0" y1="0" x2="1" y2="0"><stop offset="0" stopOpacity=".6" /><stop offset="1" stopOpacity=".12" /></linearGradient>
          <filter id="soft"><feGaussianBlur stdDeviation="2" /></filter>
        </defs>
        <path d="M13.500 40L22 20Q34 14 36 21T26 36z" fill="url(#fade)" filter="url(#soft)" />
        <path d="M13.500 40.500C11 33 1.500 22 1.500 13a12 12 0 0 1 24 0C25.500 22 16 33 13.500 40.500z" fill="url(#pin)" stroke="#2e6c97" />
        <circle cx="13.500" cy="13" r="4.200" fill="#fff" />
      </svg>

      <div className="absolute left-[10px] top-[10px] w-[34px] rounded-[4px] border-2 border-black/20 bg-white bg-clip-padding text-black">
        <div className="flex h-[31px] items-center justify-center border-b border-[#ccc]"><svg width="10" height="10" viewBox="0 0 10 10" stroke="#000" strokeWidth="2"><path d="M5 0v10M0 5h10" /></svg></div>
        <div className="flex h-[29px] items-center justify-center pb-px"><svg width="10" height="2" viewBox="0 0 10 2"><path d="M0 0h10v2H0z" /></svg></div>
      </div>
      <div className="absolute right-0 top-0 h-[20px] w-[153px] whitespace-nowrap rounded-[4px] bg-white text-center text-[10.8px] leading-[19px] text-[#333]">Draw a circle to filter by radius</div>
      <div className="absolute right-[10px] top-[25px] flex h-[33px] w-[34px] items-center justify-center rounded-[4px] border-2 border-black/20 bg-white bg-clip-padding pb-px">
        <span className="h-[11px] w-[11px] rounded-full bg-[#464646]" />
      </div>
      <div className="absolute bottom-0 right-0 h-4 w-[190px] whitespace-nowrap bg-white/70 text-center text-[9.9px] leading-4 text-[#333]">
        <span className="text-[#0078a8]">Leaflet</span> | © <span className="text-[#0078a8]">OpenStreetMap</span> contributors
      </div>
    </div>
  );
}

/* ---------- logos ---------- */

function Logos() {
  const blue = "#11698c";
  const green = "#93c11f";
  return (
    <div className="flex pl-[462px] pt-5">
      <div className="w-[84px] text-[10.4px] leading-[13px] text-[#11698c]">
        <svg width="51" height="35" viewBox="0 0 51 35" className="mb-[5px] ml-px">
          <path d="M0 17V10Q0 1 9 0V8Q9 16 0 17zM21 9Q21 1 30 0V17Q21 17 21 9zM21 34Q30 34 30 26V18Q21 18 21 26zM42 17Q50 18 50 26V34Q42 34 42 26z" fill={blue} />
          <path d="M10 0Q19 0 19 9V17Q10 17 10 9zM10 26Q10 18 19 18V34H10zM31 0Q39 0 39 8H31zM31 34V26Q31 18 40 18V26Q40 34 31 34z" fill={green} />
        </svg>
        <div>Naturhistoriska</div>
        <div>riksmuseet</div>
      </div>
      <div className="relative h-16 w-16 bg-[#21437f] pl-[7px] pt-[25px] font-['Lato'] text-white">
        <div className="text-[14px] leading-[13px] tracking-[0.6px]">NATUR</div>
        <div className="text-[11px] leading-[12px]">VÅRDS</div>
        <div className="text-[9.5px] leading-[10px]">VERKET</div>
        <svg width="12" height="19" viewBox="0 0 13 20" className="absolute left-[45px] top-[40px]" fill="none" stroke="#dfe5ef">
          <path d="M1 3Q6.500-1 12 3L11 7H2zM1.500 9h10v5q0 4-5 5-5-1-5-5zM6.500 2v4M4 10l5 5M9 10l-5 5M2 16h9" />
        </svg>
        <div className="absolute left-[39px] top-[6px] flex h-[35px] w-[35px] items-center justify-center rounded-full bg-[#5a0059]/90 pb-[2px] font-['Noto_Sans'] text-[16px] text-[#d9c7dc] shadow-[0_1px_6px_rgba(0,0,0,0.25)]">0</div>
      </div>
    </div>
  );
}

/* ---------- page ---------- */

export default function App() {
  return (
    <div className="h-[1080px] w-[1920px] overflow-hidden bg-white font-['Noto_Sans_CJK_SC',sans-serif] text-[12.5px] text-[#333]">
      <DesktopBar />
      <TabStrip />
      <Toolbar />
      <div className="flex h-[52px] items-center justify-between rounded-[4px] border border-[#e7e7e7] bg-[#f8f8f8] pl-[30px] pr-[43px] text-[#777]">
        <span className="text-[16px] leading-5">SeqDB Portal</span>
        <span className="leading-5">Swedish Version</span>
      </div>
      <main className="flex gap-[30px] pl-[30px]">
        <div className="w-[1230px]">
          <SearchForm />
          <ResultTable />
          <div className="flex items-start justify-between pt-[15px]">
            <div>
              <div className="h-5 leading-5">Showing rows 1 to 100 of 192</div>
              <div className="flex h-[34px] w-[300px] items-center justify-center rounded-[4px] border border-[#4cae4c] bg-[#5cb85c] text-white">
                <svg width="13" height="15" viewBox="0 0 13 15" fill="#fff" className="mb-[3px]"><path d="M0 10.500h13V15H0zM4.500 0H12v7L10 5 6.500 9H3.500L3 6.500 6.500 2.500z" /></svg>
                <span className="leading-5">Export to CSV</span>
              </div>
            </div>
            <div className="flex h-[34px] overflow-hidden rounded-[4px] border border-[#ddd] text-center leading-[32px] text-[#337ab7]">
              <span className="-m-px w-[34px] bg-[#337ab7] leading-[34px] text-white">1</span>
              <span className="ml-px w-8 border-r border-[#ddd]">2</span>
              <span className="w-[31px]">&gt;</span>
            </div>
          </div>
        </div>
        <div className="w-[620px]">
          <div className="h-[160px] pt-5">
            <div className="flex gap-[30px] text-center leading-[32px]">
              <div className="h-[34px] w-[233px] rounded-[4px] border border-[#4cae4c] bg-[#5cb85c] text-white">Search</div>
              <div className="h-[34px] w-[232px] rounded-[4px] border border-[#ccc]">Clear</div>
            </div>
            <div className="mt-[15px] leading-5">Example searches: <span className="ml-[7px] text-[#337ab7]">1</span><span className="ml-[10px] text-[#337ab7]">2</span></div>
          </div>
          <MapPanel />
          <Logos />
        </div>
      </main>
    </div>
  );
}
